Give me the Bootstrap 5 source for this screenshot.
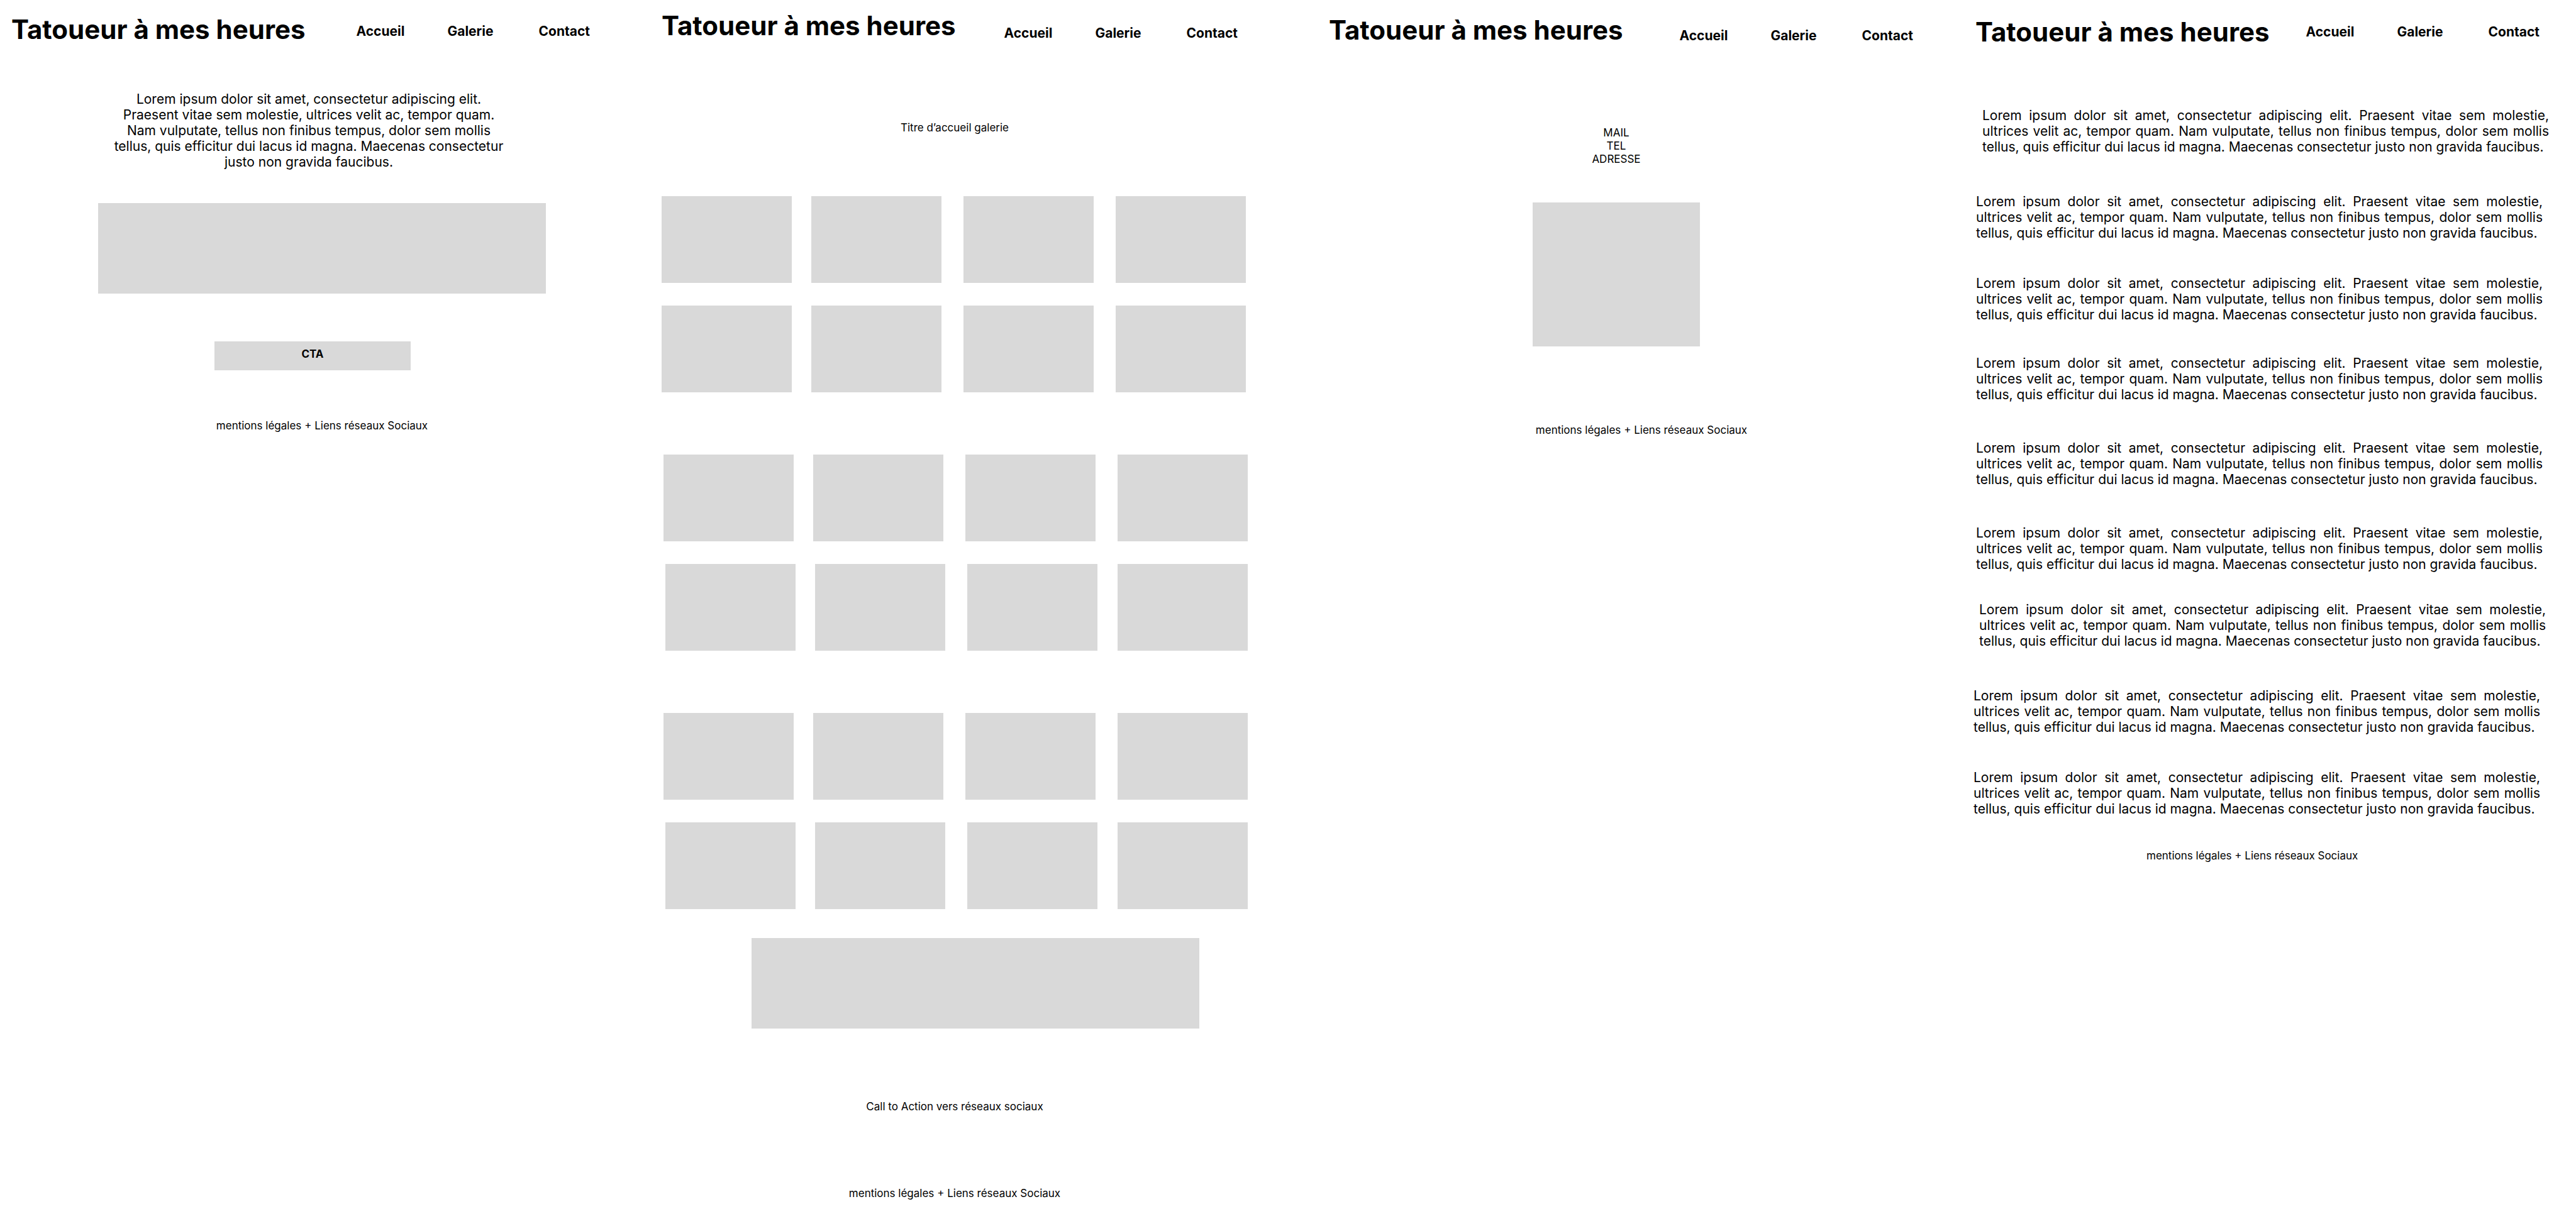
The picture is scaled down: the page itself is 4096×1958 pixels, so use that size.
<!DOCTYPE html>
<html lang="fr">
<head>
<meta charset="utf-8">
<meta name="viewport" content="width=device-width, initial-scale=1">
<title>Tatoueur à mes heures</title>
<link href="https://cdn.jsdelivr.net/npm/bootstrap@5.3.0/dist/css/bootstrap.min.css" rel="stylesheet">
<style>
  body { font-family: Inter, "Liberation Sans", sans-serif; font-size: 17px; line-height: 21px; color: #000; background: #fff; }
  address { line-height: 21px; }
  .screen-head { height: 80px; padding-left: var(--head-left); padding-right: var(--head-right); }
  .site-title { font-size: 42px; line-height: 50px; font-weight: 700; margin: var(--title-top) 0 0; white-space: nowrap; }
  .site-nav { margin-top: var(--nav-top); font-size: 21px; line-height: 25px; }
  .site-nav a { width: 145px; color: #000; font-weight: 700; text-decoration: none; }
  .site-nav a:last-child { width: auto; }
  .body-copy { font-size: 21px; line-height: 25px; margin: 0; }
  .placeholder-box { background: #d9d9d9; }
  .banner { height: 144px; max-width: 712px; }

  .screen-home { --head-left: 18px; --head-right: 86px; --title-top: 22px; --nav-top: 37px; }
  .screen-home main { padding-top: 65px; }
  .intro { max-width: 626px; margin-left: 178px; text-align: center; }
  .screen-home .banner { margin-top: 53px; }
  .cta { width: 312px; margin: 76px 0 0 341px; padding: 10px 0 15px; border: 0; font-size: 17px; line-height: 21px; font-weight: 700; color: #000; }
  .screen-home footer { margin-top: 78px; }

  .screen-gallery { --head-left: 28px; --head-right: 80px; --title-top: 16px; --nav-top: 40px; }
  .screen-gallery main { padding: 113px 64px 0 28px; }
  .screen-gallery h2 { font-size: 17px; line-height: 21px; font-weight: 400; margin: 0 0 98px; }
  .albums { display: grid; gap: 99px; }
  .album { display: grid; gap: 36px; }
  .shots { display: grid; grid-template-columns: 238fr 242fr 242fr 210fr; }
  .shots .placeholder-box { width: 207px; height: 138px; }
  .shots-right { padding-left: 3px; grid-template-columns: 238fr 242fr 242fr 207fr; }
  .shots-wide { padding-left: 6px; grid-template-columns: 238fr 242fr 239fr 207fr; }
  .screen-gallery .banner { margin: 46px 0 114px 143px; }
  .screen-gallery footer { margin: 117px 36px 49px 0; }

  .screen-contact { --head-left: 65px; --head-right: 30px; --title-top: 23px; --nav-top: 44px; }
  .screen-contact main { padding: 121px 0 0 20px; }
  .portrait { width: 266px; height: 229px; margin-top: 58px; }
  .screen-contact footer { margin-top: 123px; padding-left: 100px; }

  .screen-text { --head-left: 69px; --head-right: 58px; --title-top: 26px; --nav-top: 38px; }
  .screen-text main { padding: 91px 53px 0 70px; }
  .screen-text .body-copy { width: 901px; text-align: justify; margin-bottom: 60px; }
  .screen-text .step-lg { margin-bottom: 62px; }
  .screen-text .step-md { margin-bottom: 55px; }
  .screen-text .step-sm { margin-bottom: 52px; }
  .screen-text .step-xs { margin-bottom: 47px; }
  .screen-text .shift-out { margin-left: 10px; }
  .screen-text .shift-mid { margin-left: 5px; }
  .screen-text .shift-in { margin-left: -4px; }
  .screen-text footer { padding-left: 341px; }
</style>
<script src="https://cdn.jsdelivr.net/npm/bootstrap@5.3.0/dist/js/bootstrap.bundle.min.js" defer></script>
</head>
<body>
<div class="row g-0 min-vh-100">

  <section class="col-3 screen-home">
    <header class="screen-head d-flex justify-content-between align-items-start">
      <h1 class="site-title">Tatoueur à mes heures</h1>
      <nav class="site-nav d-flex"><a href="#">Accueil</a><a href="#">Galerie</a><a href="#">Contact</a></nav>
    </header>
    <main>
      <p class="body-copy intro">Lorem ipsum dolor sit amet, consectetur adipiscing elit. Praesent vitae sem molestie, ultrices velit ac, tempor quam. Nam vulputate, tellus non finibus tempus, dolor sem mollis tellus, quis efficitur dui lacus id magna. Maecenas consectetur justo non gravida faucibus.</p>
      <div class="placeholder-box banner mx-auto"></div>
      <button type="button" class="placeholder-box cta d-block text-center">CTA</button>
    </main>
    <footer class="text-center">mentions légales + Liens réseaux Sociaux</footer>
  </section>

  <section class="col-3 screen-gallery">
    <header class="screen-head d-flex justify-content-between align-items-start">
      <h1 class="site-title">Tatoueur à mes heures</h1>
      <nav class="site-nav d-flex"><a href="#">Accueil</a><a href="#">Galerie</a><a href="#">Contact</a></nav>
    </header>
    <main>
      <h2 class="text-center">Titre d’accueil galerie</h2>
      <div class="albums">
        <div class="album">
          <div class="shots"><div class="placeholder-box"></div><div class="placeholder-box"></div><div class="placeholder-box"></div><div class="placeholder-box"></div></div>
          <div class="shots"><div class="placeholder-box"></div><div class="placeholder-box"></div><div class="placeholder-box"></div><div class="placeholder-box"></div></div>
        </div>
        <div class="album">
          <div class="shots shots-right"><div class="placeholder-box"></div><div class="placeholder-box"></div><div class="placeholder-box"></div><div class="placeholder-box"></div></div>
          <div class="shots shots-wide"><div class="placeholder-box"></div><div class="placeholder-box"></div><div class="placeholder-box"></div><div class="placeholder-box"></div></div>
        </div>
        <div class="album">
          <div class="shots shots-right"><div class="placeholder-box"></div><div class="placeholder-box"></div><div class="placeholder-box"></div><div class="placeholder-box"></div></div>
          <div class="shots shots-wide"><div class="placeholder-box"></div><div class="placeholder-box"></div><div class="placeholder-box"></div><div class="placeholder-box"></div></div>
        </div>
      </div>
      <div class="placeholder-box banner"></div>
      <p class="text-center mb-0">Call to Action vers réseaux sociaux</p>
    </main>
    <footer class="text-center">mentions légales + Liens réseaux Sociaux</footer>
  </section>

  <section class="col-3 screen-contact">
    <header class="screen-head d-flex justify-content-between align-items-start">
      <h1 class="site-title">Tatoueur à mes heures</h1>
      <nav class="site-nav d-flex"><a href="#">Accueil</a><a href="#">Galerie</a><a href="#">Contact</a></nav>
    </header>
    <main class="d-flex flex-column align-items-center">
      <address class="text-center mb-0">MAIL<br>TEL<br>ADRESSE</address>
      <div class="placeholder-box portrait"></div>
    </main>
    <footer class="text-center">mentions légales + Liens réseaux Sociaux</footer>
  </section>

  <section class="col-3 screen-text">
    <header class="screen-head d-flex justify-content-between align-items-start">
      <h1 class="site-title">Tatoueur à mes heures</h1>
      <nav class="site-nav d-flex"><a href="#">Accueil</a><a href="#">Galerie</a><a href="#">Contact</a></nav>
    </header>
    <main>
      <p class="body-copy step-lg shift-out">Lorem ipsum dolor sit amet, consectetur adipiscing elit. Praesent vitae sem molestie, ultrices velit ac, tempor quam. Nam vulputate, tellus non finibus tempus, dolor sem mollis tellus, quis efficitur dui lacus id magna. Maecenas consectetur justo non gravida faucibus.</p>
      <p class="body-copy step-md">Lorem ipsum dolor sit amet, consectetur adipiscing elit. Praesent vitae sem molestie, ultrices velit ac, tempor quam. Nam vulputate, tellus non finibus tempus, dolor sem mollis tellus, quis efficitur dui lacus id magna. Maecenas consectetur justo non gravida faucibus.</p>
      <p class="body-copy step-sm">Lorem ipsum dolor sit amet, consectetur adipiscing elit. Praesent vitae sem molestie, ultrices velit ac, tempor quam. Nam vulputate, tellus non finibus tempus, dolor sem mollis tellus, quis efficitur dui lacus id magna. Maecenas consectetur justo non gravida faucibus.</p>
      <p class="body-copy">Lorem ipsum dolor sit amet, consectetur adipiscing elit. Praesent vitae sem molestie, ultrices velit ac, tempor quam. Nam vulputate, tellus non finibus tempus, dolor sem mollis tellus, quis efficitur dui lacus id magna. Maecenas consectetur justo non gravida faucibus.</p>
      <p class="body-copy">Lorem ipsum dolor sit amet, consectetur adipiscing elit. Praesent vitae sem molestie, ultrices velit ac, tempor quam. Nam vulputate, tellus non finibus tempus, dolor sem mollis tellus, quis efficitur dui lacus id magna. Maecenas consectetur justo non gravida faucibus.</p>
      <p class="body-copy step-xs">Lorem ipsum dolor sit amet, consectetur adipiscing elit. Praesent vitae sem molestie, ultrices velit ac, tempor quam. Nam vulputate, tellus non finibus tempus, dolor sem mollis tellus, quis efficitur dui lacus id magna. Maecenas consectetur justo non gravida faucibus.</p>
      <p class="body-copy step-lg shift-mid">Lorem ipsum dolor sit amet, consectetur adipiscing elit. Praesent vitae sem molestie, ultrices velit ac, tempor quam. Nam vulputate, tellus non finibus tempus, dolor sem mollis tellus, quis efficitur dui lacus id magna. Maecenas consectetur justo non gravida faucibus.</p>
      <p class="body-copy step-md shift-in">Lorem ipsum dolor sit amet, consectetur adipiscing elit. Praesent vitae sem molestie, ultrices velit ac, tempor quam. Nam vulputate, tellus non finibus tempus, dolor sem mollis tellus, quis efficitur dui lacus id magna. Maecenas consectetur justo non gravida faucibus.</p>
      <p class="body-copy step-sm shift-in">Lorem ipsum dolor sit amet, consectetur adipiscing elit. Praesent vitae sem molestie, ultrices velit ac, tempor quam. Nam vulputate, tellus non finibus tempus, dolor sem mollis tellus, quis efficitur dui lacus id magna. Maecenas consectetur justo non gravida faucibus.</p>
    </main>
    <footer>mentions légales + Liens réseaux Sociaux</footer>
  </section>

</div>
</body>
</html>
